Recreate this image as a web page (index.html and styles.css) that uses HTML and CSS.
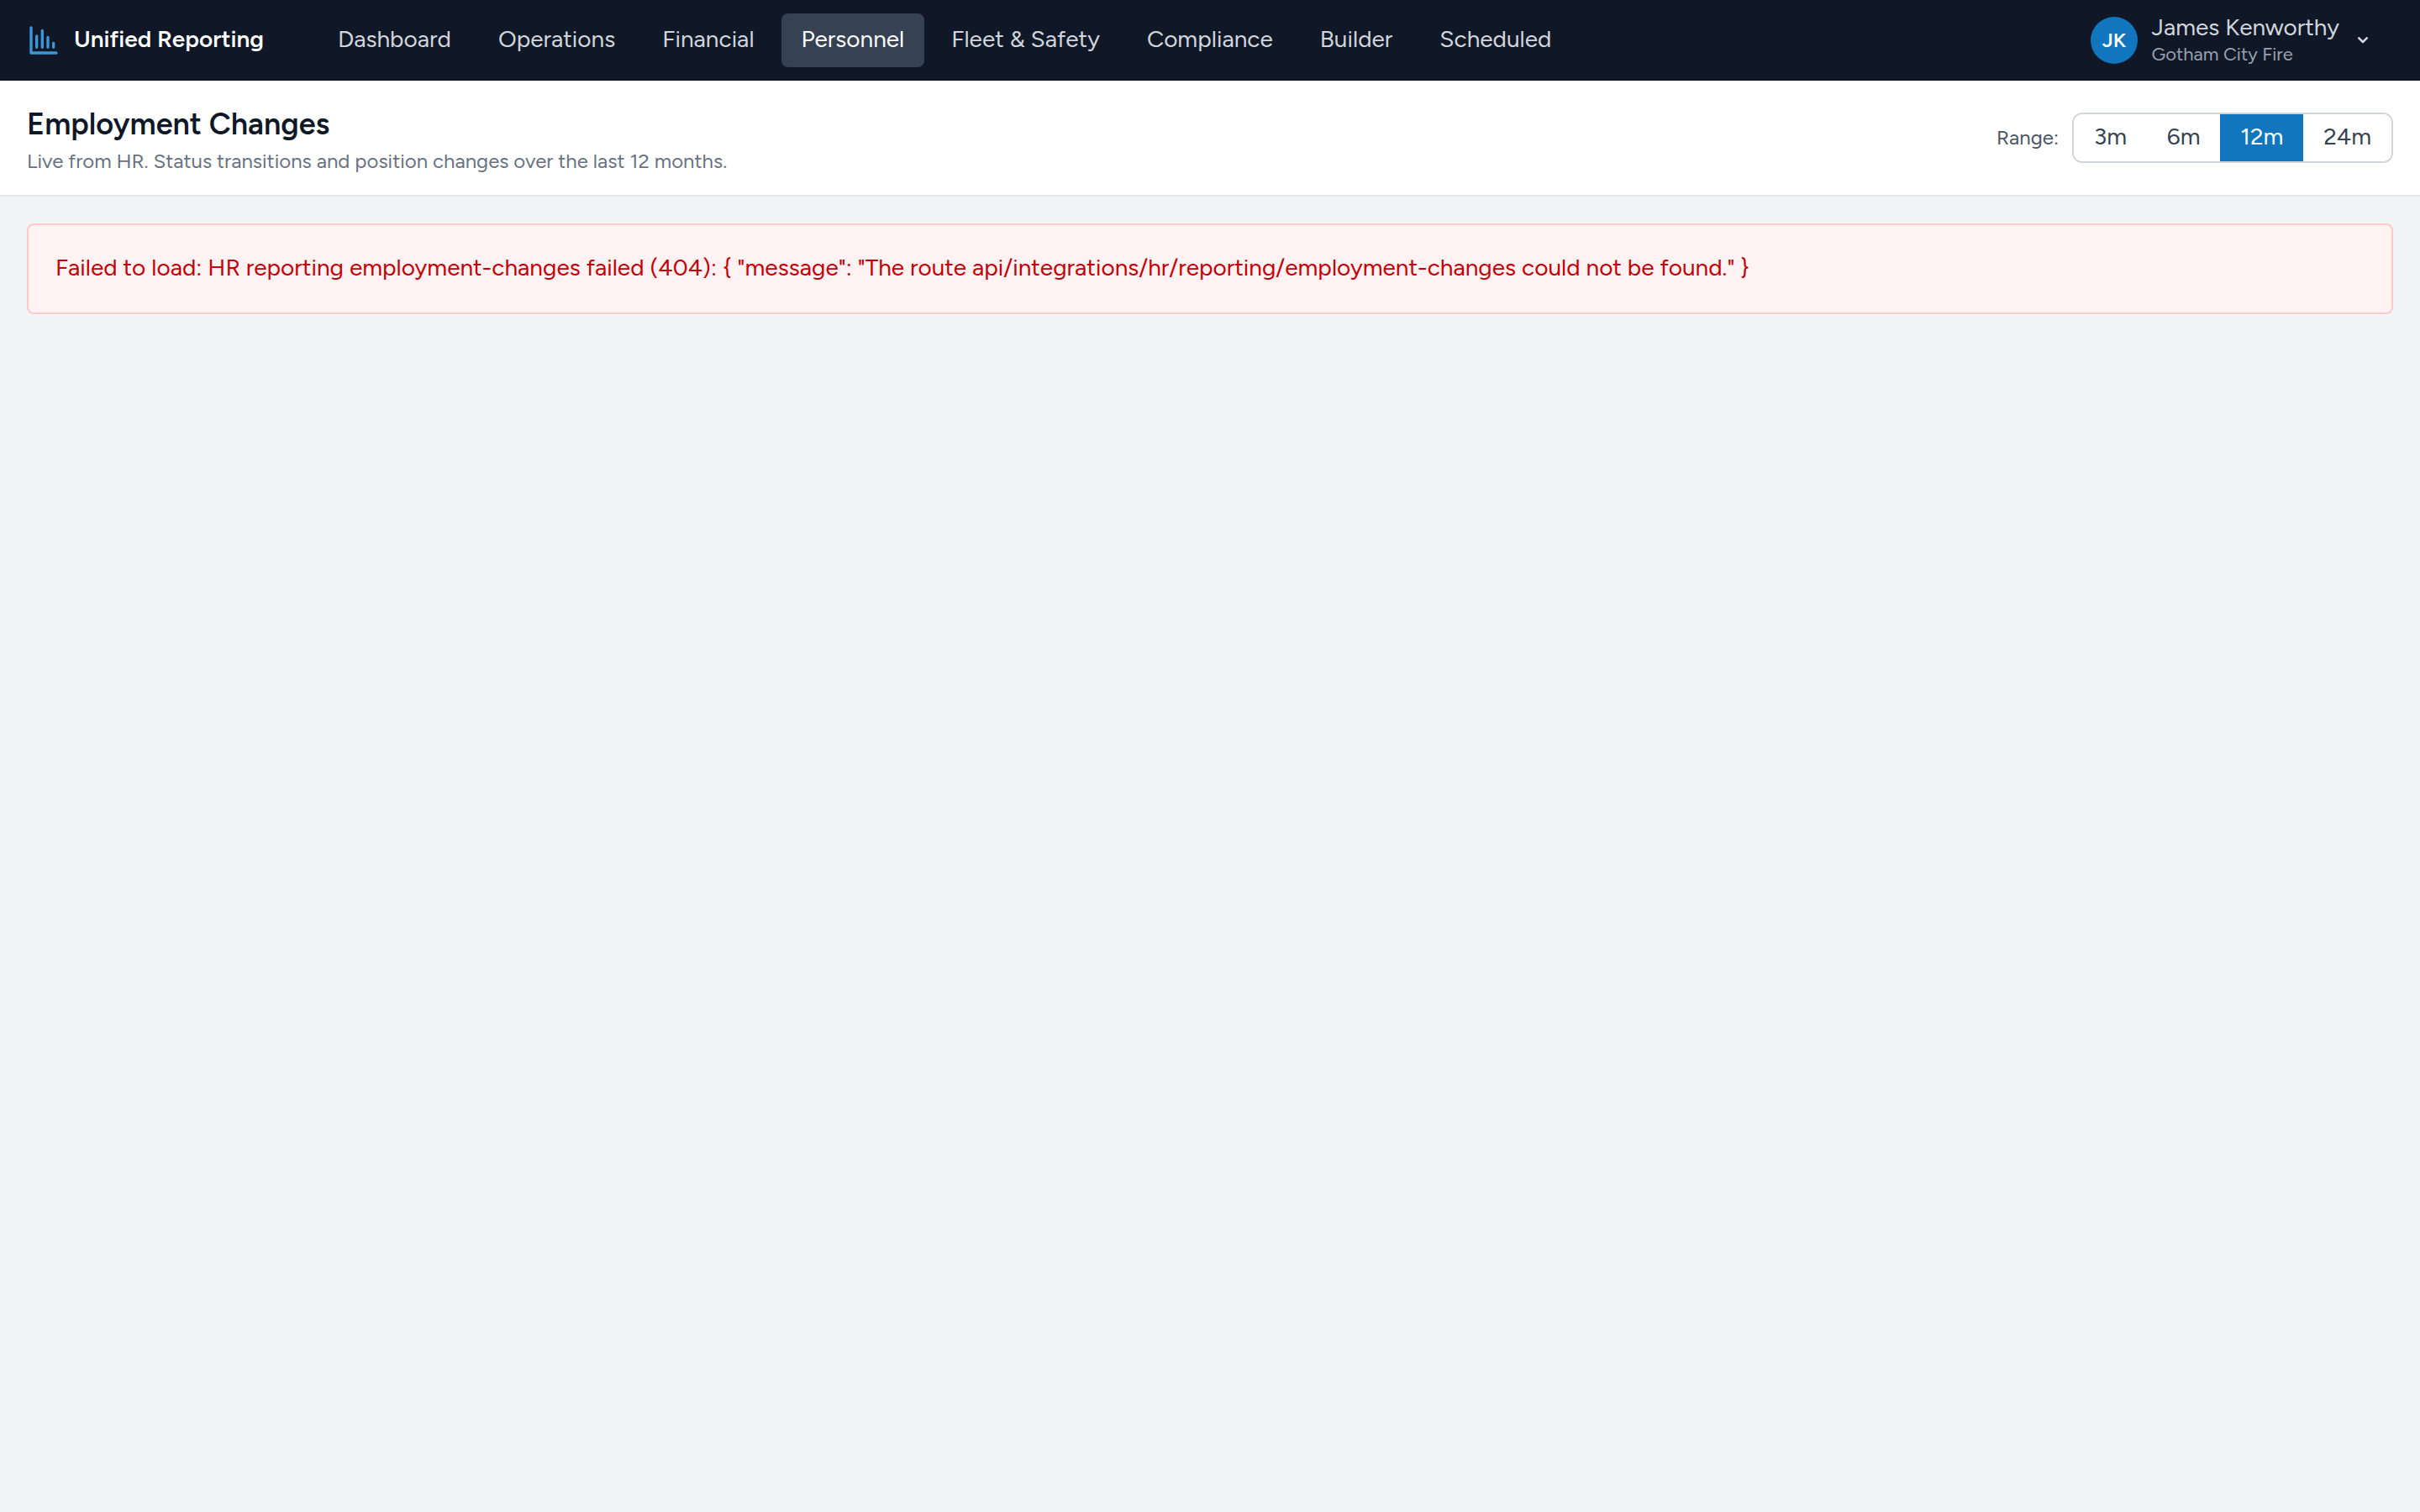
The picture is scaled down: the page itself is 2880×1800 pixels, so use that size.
FILE: index.html
```html
<!DOCTYPE html>
<html lang="en">
<head>
    <meta charset="UTF-8">
    <meta name="viewport" content="width=device-width, initial-scale=1.0">
    <title>Employment Changes - Unified Reporting</title>
    <link rel="stylesheet" href="styles.css">
</head>
<body>
    <header class="topbar">
        <a class="brand">
            <svg class="brand-icon" viewBox="0 0 24 24">
                <path d="M3 3v18h18M7 17V8.9M11 17V5.1M15 17V9.9M19 17v-3"/>
            </svg>
            <span class="brand-name">Unified Reporting</span>
        </a>
        <nav class="nav">
            <a class="nav-link">Dashboard</a>
            <a class="nav-link">Operations</a>
            <a class="nav-link">Financial</a>
            <a class="nav-link active">Personnel</a>
            <a class="nav-link">Fleet &amp; Safety</a>
            <a class="nav-link">Compliance</a>
            <a class="nav-link">Builder</a>
            <a class="nav-link">Scheduled</a>
        </nav>
        <div class="user">
            <div class="avatar">JK</div>
            <div class="user-info">
                <div class="user-name">James Kenworthy</div>
                <div class="user-org">Gotham City Fire</div>
            </div>
            <svg class="chevron" viewBox="0 0 12 8"><path d="M1.3 1.3L6 6l4.7-4.7"/></svg>
        </div>
    </header>

    <section class="page-head">
        <div class="heading">
            <h1 class="title">Employment Changes</h1>
            <p class="subtitle">Live from HR. Status transitions and position changes over the last 12 months.</p>
        </div>
        <div class="range">
            <span class="range-label">Range:</span>
            <div class="range-group">
                <button class="range-btn">3m</button>
                <button class="range-btn">6m</button>
                <button class="range-btn active">12m</button>
                <button class="range-btn">24m</button>
            </div>
        </div>
    </section>

    <main class="content">
        <div class="alert">Failed to load: HR reporting employment-changes failed (404): { "message": "The route api/integrations/hr/reporting/employment-changes could not be found." }</div>
    </main>
</body>
</html>
```
FILE: styles.css
```css
* {
    box-sizing: border-box;
}

body {
    margin: 0;
    min-height: 100vh;
    background-color: #f3f4f6;
    color: #101828;
    font: normal 28px/40px Figtree, Lato, sans-serif;
}

.topbar {
    display: flex;
    align-items: center;
    height: 96px;
    padding: 0 62px 0 32px;
    background-color: #101828;
    box-shadow: inset 0 -1px #0b101d;
}

.brand {
    display: flex;
    align-items: center;
    gap: 16px;
    margin-right: 64px;
    color: #fff;
    font-weight: 600;
    white-space: nowrap;
}

.brand-icon {
    width: 40px;
    height: 40px;
    fill: none;
    stroke: #3c97d9;
    stroke-width: 2;
    stroke-linecap: round;
    stroke-linejoin: round;
}

.brand-name {
    padding-bottom: 4px;
}

.nav {
    display: flex;
    gap: 8px;
}

.nav-link {
    height: 64px;
    padding: 10px 24px 14px;
    border-radius: 8px;
    color: #d1d5dc;
    white-space: nowrap;
}

.nav-link.active {
    background-color: #364153;
    color: #fff;
}

.user {
    display: flex;
    align-items: center;
    gap: 16px;
    margin-left: auto;
    color: #d1d5dc;
}

.avatar {
    width: 56px;
    height: 56px;
    border-radius: 50%;
    background-color: #1176bd;
    color: #fff;
    font-size: 24px;
    font-weight: 600;
    line-height: 56px;
    text-align: center;
}

.user-info {
    width: 226px;
    padding-bottom: 2px;
    white-space: nowrap;
}

.user-name {
    margin: 0 0 2px 0.5px;
    line-height: 34px;
}

.user-org {
    margin-left: 0.5px;
    color: #99a1af;
    font-size: 22px;
    line-height: 28px;
}

.chevron {
    width: 12px;
    height: 8px;
    margin-left: 4px;
    fill: none;
    stroke: #d1d5dc;
    stroke-width: 2.6;
    stroke-linecap: round;
    stroke-linejoin: round;
}

.page-head {
    display: flex;
    align-items: center;
    justify-content: space-between;
    height: 138px;
    padding: 0 32px;
    background-color: #fff;
    border-bottom: 2px solid #e5e7eb;
}

.heading {
    padding-top: 6px;
}

.title {
    margin: 0;
    font-size: 36px;
    font-weight: 600;
    line-height: 48px;
}

.subtitle {
    margin: 2px 0 0;
    color: #6a7282;
    font-size: 24px;
    line-height: 36px;
}

.range {
    display: flex;
    align-items: center;
    gap: 16px;
}

.range-label {
    color: #4a5565;
    font-size: 24px;
}

.range-group {
    display: flex;
    width: 382px;
    height: 60px;
    border: 2px solid #d1d5dc;
    border-radius: 12px;
    overflow: hidden;
}

.range-btn {
    flex: 1 1 auto;
    padding: 0 23.8px 4px;
    border: 0;
    background-color: #fff;
    color: #364153;
    font: inherit;
}

.range-btn.active {
    background-color: #1176bd;
    color: #fff;
}

.content {
    padding: 32px;
}

.alert {
    padding: 30px 32px 34px;
    border: 2px solid #ffc9c9;
    border-radius: 8px;
    background-color: #fef2f2;
    color: #c10007;
}
```
